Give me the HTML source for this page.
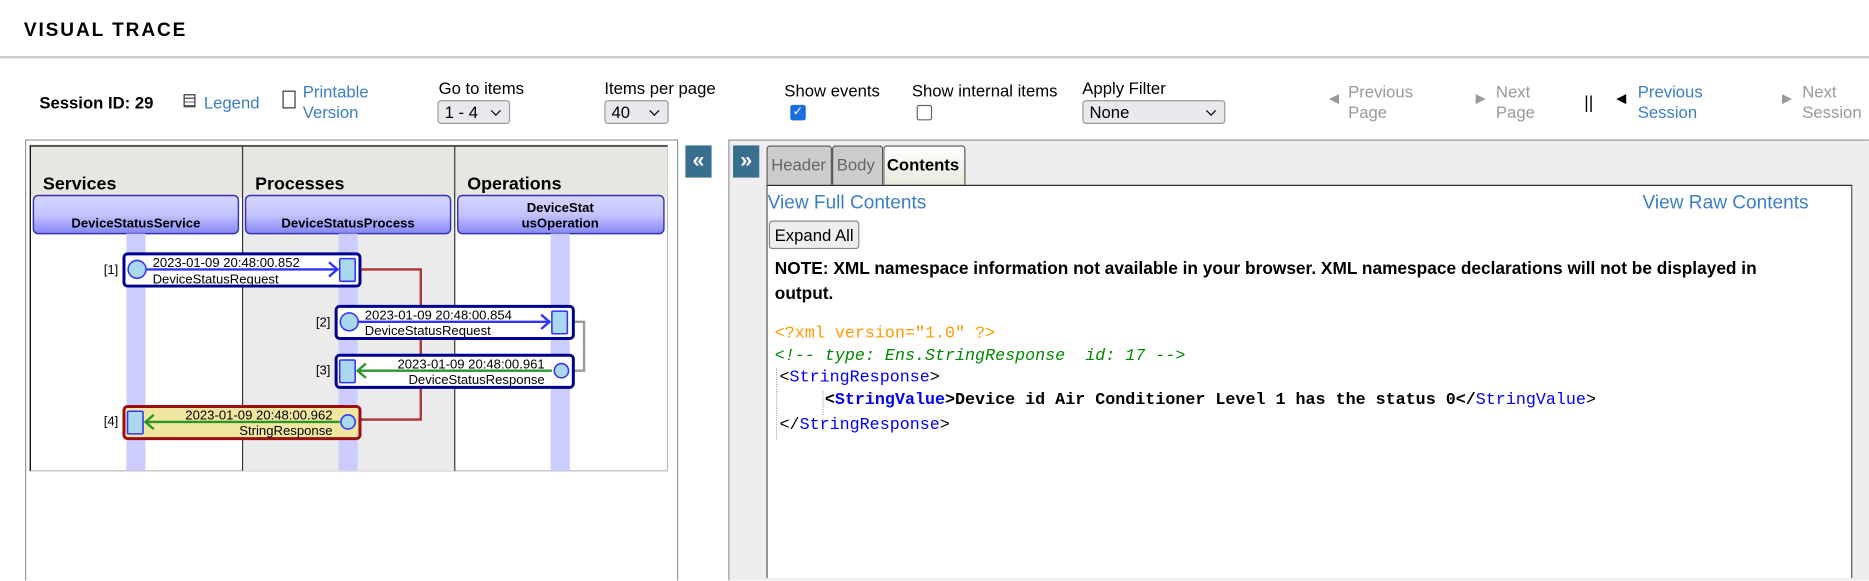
<!DOCTYPE html>
<html><head><meta charset="utf-8"><style>
html,body{margin:0;padding:0;background:#fff;overflow:hidden;width:1869px;height:574px}
#s{position:absolute;left:0;top:0;width:1568px;height:482px;transform:scale(1.19196);transform-origin:0 0;font-family:"Liberation Sans",Arial,sans-serif;font-size:14px;color:#000}
.a{position:absolute;white-space:nowrap}
.lnk{color:#3a7fc4}
.gr{color:#999}
.sel{position:absolute;border:1px solid #999;border-radius:3px;background:#e9e9ed;height:20px;box-sizing:border-box;font-size:14px;padding-left:5px;line-height:19px}
.sel:after{content:"";position:absolute;right:8px;top:5px;width:5px;height:5px;border-right:1.5px solid #000;border-bottom:1.5px solid #000;transform:rotate(45deg)}
.mono{font-family:"Liberation Mono",monospace;font-size:14px}
</style></head><body><div id="s">
<div class="a" style="left:20px;top:17px;font-weight:bold;font-size:16px;letter-spacing:1.6px">VISUAL TRACE</div>
<div class="a" style="left:0;top:47px;width:1568px;height:2px;background:#ccc"></div>

<div class="a" style="left:33px;top:78px;font-weight:bold">Session ID: 29</div>
<div class="a" style="left:154px;top:79px;width:10px;height:11px;border:1px solid #333;box-sizing:border-box;background:repeating-linear-gradient(#fff 0 2px,#666 2px 3px)"></div>
<div class="a lnk" style="left:171px;top:78px">Legend</div>
<div class="a" style="left:237px;top:76px;width:11px;height:15px;border:1px solid #333;box-sizing:border-box"></div>
<div class="a lnk" style="left:254px;top:69px;line-height:17px">Printable<br>Version</div>
<div class="a" style="left:368px;top:66px">Go to items</div>
<div class="sel" style="left:367px;top:84px;width:61px">1 - 4</div>
<div class="a" style="left:507px;top:66px">Items per page</div>
<div class="sel" style="left:507px;top:84px;width:54px">40</div>
<div class="a" style="left:658px;top:68px">Show events</div>
<div class="a" style="left:663px;top:88px;width:13px;height:13px;background:#1a6fe0;border-radius:2px;color:#fff;font-size:11px;line-height:13px;text-align:center">✓</div>
<div class="a" style="left:765px;top:68px">Show internal items</div>
<div class="a" style="left:769px;top:88px;width:13px;height:13px;border:1px solid #666;box-sizing:border-box;border-radius:2px"></div>
<div class="a" style="left:908px;top:66px">Apply Filter</div>
<div class="sel" style="left:908px;top:84px;width:120px">None</div>
<div class="a gr" style="left:1115px;top:76px;font-size:11px">◀</div>
<div class="a gr" style="left:1131px;top:69px;line-height:17px">Previous<br>Page</div>
<div class="a gr" style="left:1238px;top:76px;font-size:11px">▶</div>
<div class="a gr" style="left:1255px;top:69px;line-height:17px">Next<br>Page</div>
<div class="a" style="left:1329px;top:78px;font-size:15px">||</div>
<div class="a" style="left:1356px;top:76px;font-size:11px">◀</div>
<div class="a lnk" style="left:1374px;top:69px;line-height:17px">Previous<br>Session</div>
<div class="a gr" style="left:1495px;top:76px;font-size:11px">▶</div>
<div class="a gr" style="left:1512px;top:69px;line-height:17px">Next<br>Session</div>

<div class="a" style="left:21px;top:117px;width:548px;height:370px;border:1px solid #999;border-bottom:none;box-sizing:border-box"></div>
<div class="a" style="left:575px;top:122px;width:22px;height:27px;background:#3a6e8f;color:#fff;font-size:18px;line-height:25px;text-align:center;font-weight:bold">«</div>
<div class="a" style="left:611px;top:117px;width:957px;height:370px;background:#eee;border-left:1px solid #999;border-top:1px solid #999;box-sizing:border-box"></div>
<div class="a" style="left:615px;top:122px;width:22px;height:27px;background:#3a6e8f;color:#fff;font-size:18px;line-height:25px;text-align:center;font-weight:bold">»</div>
<div class="a" style="left:643px;top:122px;width:55px;height:33px;background:#ccc;border:1px solid #555;border-bottom:none;border-radius:3px 3px 0 0;box-sizing:border-box;color:#666;padding:7px 3px;font-size:14px">Header</div>
<div class="a" style="left:698px;top:122px;width:43px;height:33px;background:#ccc;border:1px solid #555;border-bottom:none;border-radius:3px 3px 0 0;box-sizing:border-box;color:#666;padding:7px 3px">Body</div>
<div class="a" style="left:741px;top:122px;width:69px;height:34px;background:linear-gradient(#fff,#e8e8dc);border:1px solid #555;border-bottom:none;border-radius:3px 3px 0 0;box-sizing:border-box;font-weight:bold;padding:7px 2px">Contents</div>
<div class="a" style="left:643px;top:155px;width:911px;height:330px;background:#fff;border-left:1px solid #555;border-right:1px solid #555;border-top:1px solid #222;box-sizing:border-box"></div>
<div class="a lnk" style="left:644px;top:162px;font-size:16px">View Full Contents</div>
<div class="a lnk" style="left:1378px;top:162px;font-size:16px">View Raw Contents</div>
<div class="a" style="left:645px;top:185px;width:76px;height:24px;border:1px solid #888;border-radius:3px;background:#eee;box-sizing:border-box;text-align:center;line-height:22px">Expand All</div>
<div class="a" style="left:650px;top:216px;font-weight:bold;font-size:14.5px;line-height:21px">NOTE: XML namespace information not available in your browser. XML namespace declarations will not be displayed in<br>output.</div>
<div class="a mono" style="left:650px;top:272px;color:#f90">&lt;?xml version="1.0" ?&gt;</div>
<div class="a mono" style="left:650px;top:291px;color:#080;font-style:italic">&lt;!-- type: Ens.StringResponse&nbsp; id: 17 --&gt;</div>
<div class="a" style="left:651px;top:309px;height:60px;border-left:1px dotted #aaa"></div>
<div class="a mono" style="left:654px;top:309px">&lt;<span style="color:#00f">StringResponse</span>&gt;</div>
<div class="a" style="left:690px;top:328px;height:20px;border-left:1px dotted #aaa"></div>
<div class="a mono" style="left:692px;top:328px;font-weight:bold">&lt;<span style="color:#00f">StringValue</span>&gt;Device id Air Conditioner Level 1 has the status 0&lt;/<span style="color:#00f;font-weight:normal">StringValue</span><span style="font-weight:normal">&gt;</span></div>
<div class="a mono" style="left:654px;top:349px">&lt;/<span style="color:#00f">StringResponse</span>&gt;</div>

<svg class="a" style="left:0;top:0" width="1568" height="482" font-family="Liberation Sans,Arial,sans-serif">
<defs><linearGradient id="g" x1="0" y1="0" x2="0" y2="1"><stop offset="0" stop-color="#d6d6ff"/><stop offset="0.5" stop-color="#c4c4ff"/><stop offset="1" stop-color="#8585f5"/></linearGradient></defs>
<rect x="25" y="122" width="535" height="273" fill="#fff" stroke="#bbb"/>
<rect x="203" y="122" width="178" height="273" fill="#ebebeb"/>
<rect x="25" y="122" width="535" height="44" fill="#e8e6e2"/>
<line x1="25" y1="122.5" x2="560" y2="122.5" stroke="#111"/>
<line x1="25.5" y1="122" x2="25.5" y2="395" stroke="#111"/>
<line x1="203.5" y1="122" x2="203.5" y2="395" stroke="#333"/>
<line x1="381.5" y1="122" x2="381.5" y2="395" stroke="#333"/>
<g font-weight="bold" font-size="15"><text x="36" y="159">Services</text><text x="214" y="159">Processes</text><text x="392" y="159">Operations</text></g>
<g stroke="#3434b0" stroke-width="1.2" fill="url(#g)"><rect x="28" y="164" width="172" height="32" rx="4"/><rect x="206" y="164" width="172" height="32" rx="4"/><rect x="384" y="164" width="173" height="32" rx="4"/></g>
<g font-weight="bold" font-size="11" text-anchor="middle"><text x="114" y="191">DeviceStatusService</text><text x="292" y="191">DeviceStatusProcess</text><text x="470" y="178">DeviceStat</text><text x="470" y="191">usOperation</text></g>
<g fill="#ccccff"><rect x="106" y="196" width="16" height="199"/><rect x="284" y="196" width="16" height="199"/><rect x="462" y="196" width="16" height="199"/></g>
<polyline points="302,226 353,226 353,352 302,352" fill="none" stroke="#a33" stroke-width="2"/>
<polyline points="481,270 490,270 490,311 481,311" fill="none" stroke="#999" stroke-width="2"/>
<g font-size="11">
<text x="87" y="230">[1]</text><text x="265" y="274">[2]</text><text x="265" y="314">[3]</text><text x="87" y="357">[4]</text>
</g>
<rect x="104" y="213" width="198" height="27" rx="3" fill="#fff" stroke="#00008f" stroke-width="2.5"/>
<line x1="123" y1="226" x2="283" y2="226" stroke="#33f" stroke-width="2"/><polyline points="276,220 283,226 276,232" fill="none" stroke="#33f" stroke-width="2"/>
<circle cx="115" cy="226" r="7.5" fill="#aad8ef" stroke="#33f" stroke-width="1.3"/>
<rect x="285" y="217" width="13" height="19" rx="1" fill="#aad8ef" stroke="#33f" stroke-width="1.3"/>
<text x="128" y="224" font-size="11">2023-01-09 20:48:00.852</text><text x="128" y="238" font-size="11">DeviceStatusRequest</text>
<rect x="282" y="257" width="199" height="27" rx="3" fill="#fff" stroke="#00008f" stroke-width="2.5"/>
<line x1="301" y1="270" x2="461" y2="270" stroke="#33f" stroke-width="2"/><polyline points="454,264 461,270 454,276" fill="none" stroke="#33f" stroke-width="2"/>
<circle cx="293" cy="270" r="7.5" fill="#aad8ef" stroke="#33f" stroke-width="1.3"/>
<rect x="463" y="261" width="13" height="19" rx="1" fill="#aad8ef" stroke="#33f" stroke-width="1.3"/>
<text x="306" y="268" font-size="11">2023-01-09 20:48:00.854</text><text x="306" y="281" font-size="11">DeviceStatusRequest</text>
<rect x="282" y="298" width="199" height="27" rx="3" fill="#fff" stroke="#00008f" stroke-width="2.5"/>
<line x1="300" y1="311" x2="463" y2="311" stroke="#2a962a" stroke-width="2"/><polyline points="307,305 300,311 307,317" fill="none" stroke="#2a962a" stroke-width="2"/>
<rect x="285" y="302" width="13" height="19" rx="1" fill="#aad8ef" stroke="#33f" stroke-width="1.3"/>
<circle cx="471" cy="311" r="6" fill="#aad8ef" stroke="#33f" stroke-width="1.3"/>
<text x="457" y="309" font-size="11" text-anchor="end">2023-01-09 20:48:00.961</text><text x="457" y="322" font-size="11" text-anchor="end">DeviceStatusResponse</text>
<rect x="104" y="341" width="198" height="27" rx="3" fill="#f0e6a0" stroke="#9a1010" stroke-width="2.5"/>
<line x1="122" y1="354" x2="285" y2="354" stroke="#2a962a" stroke-width="2"/><polyline points="129,348 122,354 129,360" fill="none" stroke="#2a962a" stroke-width="2"/>
<rect x="107" y="345" width="13" height="19" rx="1" fill="#aad8ef" stroke="#33f" stroke-width="1.3"/>
<circle cx="292" cy="354" r="6" fill="#aad8ef" stroke="#33f" stroke-width="1.3"/>
<text x="279" y="352" font-size="11" text-anchor="end">2023-01-09 20:48:00.962</text><text x="279" y="365" font-size="11" text-anchor="end">StringResponse</text>
</svg>
</div></body></html>
